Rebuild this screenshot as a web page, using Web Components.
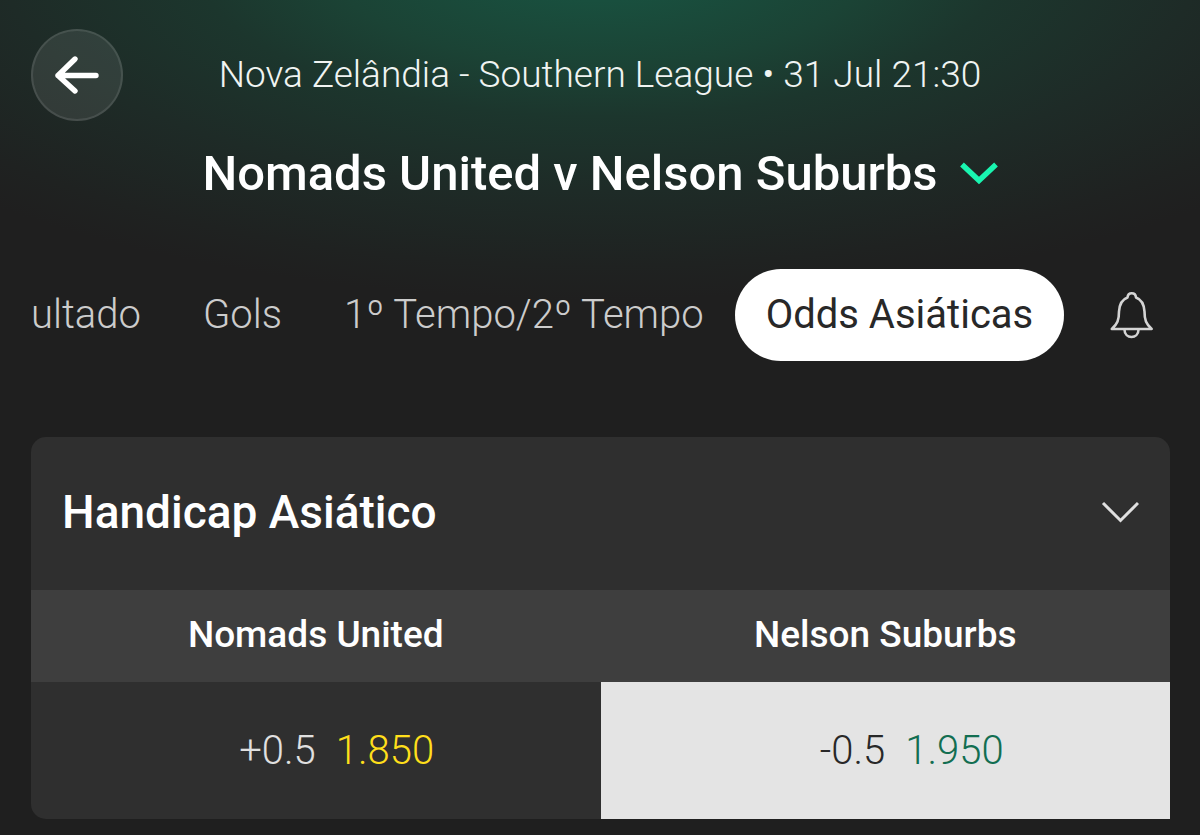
<!DOCTYPE html>
<html lang="pt">
<head>
<meta charset="utf-8">
<meta name="viewport" content="width=device-width, initial-scale=1">
<title>Nomads United v Nelson Suburbs</title>
<style>
  body {
    margin: 0;
    min-height: 100vh;
    color: #fff;
    font-family: Roboto, sans-serif;
    background: radial-gradient(ellipse 880px 340px at 50% -40px, #19523f 0%, #194f3e 12%, #1b4335 31%, #1c362d 46%, #1e2b27 68%, #1f2221 90%, #1f1f1f 100%) #1f1f1f;
  }
</style>
</head>
<body>
<event-page></event-page>

<script>
const define = (name, html) => customElements.define(name, class extends HTMLElement {
  constructor() {
    super();
    const t = document.createElement('template');
    t.innerHTML = html;
    this.attachShadow({ mode: 'open' }).append(t.content.cloneNode(true));
  }
});

define('event-header', `
<style>
  :host { display: grid; grid-template-columns: 92px 1fr 92px; align-items: center; row-gap: 23px; padding: 29px 31px 0; }
  button { font: inherit; color: inherit; background: none; border: 0; padding: 0; cursor: pointer; }
  .back {
    width: 92px; height: 92px; box-sizing: border-box; border-radius: 50%;
    border: 2px solid rgba(255,255,255,.1); background: rgba(255,255,255,.09);
    display: grid; place-items: center;
  }
  p { margin: 0; text-align: center; font-size: 37px; line-height: 48px; font-weight: 300; color: #f0f4f2; white-space: nowrap; }
  h1 { grid-column: 1 / -1; margin: 0; font-size: 49px; line-height: 60px; font-weight: 500; text-align: center; white-space: nowrap; }
  h1 button { display: inline-flex; align-items: center; gap: 22px; }
  svg { display: block; }
</style>
<button class="back" aria-label="Voltar">
  <svg width="46" height="40" viewBox="0 0 46 40" fill="none" stroke="#fff" stroke-width="5.4" stroke-linecap="round" stroke-linejoin="round"><path d="M21 4 4 20.500 21 36M4 20.500H42"/></svg>
</button>
<p><slot name="info"></slot></p>
<h1><button><slot name="title"></slot>
  <svg width="38" height="24" viewBox="0 0 38 24" fill="none" stroke="#19f5b0" stroke-width="5.4"><path d="M2 2.500 19 18.500 36 2.500"/></svg>
</button></h1>
`);

define('tab-item', `
<style>
  :host { display: block; flex: none; }
  button {
    display: block; height: 92px; padding: 0 31px; border: 0; border-radius: 46px; background: none;
    font: 300 40px/92px Roboto, sans-serif; color: #ccc; white-space: nowrap; cursor: pointer;
  }
  :host([selected]) button { background: #fff; color: #282828; font-weight: 400; }
</style>
<button><slot></slot></button>
`);

define('tab-bar', `
<style>
  :host { display: flex; align-items: center; justify-content: space-between; padding: 65px 46px 0 31px; }
  nav { display: flex; overflow: hidden; }
  .bell { padding: 0; border: 0; background: none; cursor: pointer; }
  svg { display: block; }
  ::slotted(:first-child) { margin-left: -31px; }
</style>
<nav><slot></slot></nav>
<button class="bell" aria-label="Notificações">
  <svg width="44" height="48" viewBox="0 0 44 48" fill="none" stroke="#d4d4d4" stroke-width="2.6" stroke-linejoin="round">
    <path d="M1.800 38C7.500 33 9 29 9 20.500 9.500 12.500 12 8.500 17.500 6.500 18 .8 25.500 .8 26 6.500 31.500 8.500 34 12.500 34.500 20.500 34.500 29 36 33 41.700 38Z"/>
    <path d="M14.500 38.500C14.500 48.500 28.500 48.500 28.500 38.500"/>
  </svg>
</button>
`);

define('odds-price', `
<style>
  :host { display: block; }
  button {
    display: grid; grid-template-columns: 1fr 1fr; column-gap: 20px; align-items: center;
    width: 100%; height: 137px; border: 0; padding: 0 0 0 20px; background: none;
    font: 300 40px/48px Roboto, sans-serif; color: #e0e0e0; cursor: pointer;
  }
  .line { text-align: right; }
  .price { text-align: left; color: #ffdf1b; }
  :host([selected]) button { background: #e4e4e4; color: #282828; }
  :host([selected]) .price { color: #126e51; }
</style>
<button><span class="line"><slot name="line"></slot></span><span class="price"><slot></slot></span></button>
`);

define('market-card', `
<style>
  :host { display: block; margin: 76px 30px 16px 31px; border-radius: 15px 15px 0 15px; overflow: hidden; background: #2f2f2f; }
  h2 { margin: 0; font-size: 46px; font-weight: 500; line-height: 150px; }
  h2 button {
    display: flex; align-items: center; justify-content: space-between; width: 100%; padding: 0 31px 3px; border: 0;
    background: none; font: inherit; color: #fff; text-align: left; cursor: pointer;
  }
  svg { display: block; }
</style>
<h2><button aria-expanded="true"><slot name="title"></slot>
  <svg width="38" height="22" viewBox="0 0 38 22" fill="none" stroke="#e0e0e0" stroke-width="3"><path d="M2 2 19.500 19.500 37 2"/></svg>
</button></h2>
<slot></slot>
`);

define('odds-table', `
<style>
  :host { display: block; }
  table { width: 100%; border-collapse: collapse; table-layout: fixed; }
  th { height: 90px; padding: 0 0 2px; background: #3e3e3e; font-size: 37px; line-height: 44px; font-weight: 500; text-align: center; }
  td { padding: 0; }
</style>
<table>
  <thead><tr><th scope="col">Nomads United</th><th scope="col">Nelson Suburbs</th></tr></thead>
  <tbody><tr>
    <td><odds-price><span slot="line">+0.5</span>1.850</odds-price></td>
    <td><odds-price selected><span slot="line">-0.5</span>1.950</odds-price></td>
  </tr></tbody>
</table>
`);

define('event-page', `
<style>:host { display: block; }</style>
<event-header>
  <span slot="info">Nova Zelândia - Southern League • 31 Jul 21:30</span>
  <span slot="title">Nomads United v Nelson Suburbs</span>
</event-header>
<tab-bar>
  <tab-item>ultado</tab-item>
  <tab-item>Gols</tab-item>
  <tab-item>1º Tempo/2º Tempo</tab-item>
  <tab-item selected>Odds Asiáticas</tab-item>
</tab-bar>
<market-card>
  <span slot="title">Handicap Asiático</span>
  <odds-table></odds-table>
</market-card>
`);
</script>
</body>
</html>
